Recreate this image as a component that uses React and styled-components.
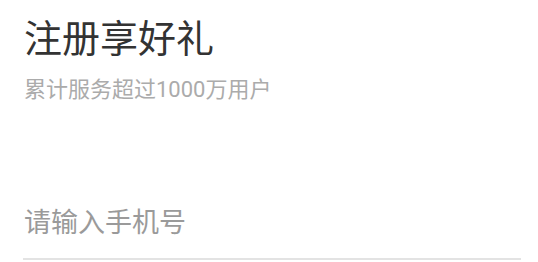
import React from 'react';
import styled, { createGlobalStyle } from 'styled-components';

const GlobalStyle = createGlobalStyle`
    html, body {
        margin: 0;
        padding: 0;
        background: #ffffff;
    }
    body {
        font-family: Roboto, "Noto Sans CJK SC", sans-serif;
    }
`;

const Page = styled.div`
    display: flex;
    flex-direction: column;
    padding: 16px 17px 0 23px;
`;

const Title = styled.h1`
    margin: 0 0 0 1px;
    font-size: 38px;
    line-height: 46px;
    font-weight: 400;
    color: #333333;
`;

const Subtitle = styled.p`
    margin: 15px 0 0 1px;
    font-size: 22px;
    line-height: 26px;
    color: #ababab;
`;

const PhoneField = styled.div`
    margin-top: 101px;
    display: flex;
    align-items: center;
    height: 56px;
    padding-bottom: 16px;
    box-sizing: border-box;
    border-bottom: 2px solid #e3e3e3;
`;

const PhoneInput = styled.input`
    flex: 1;
    border: none;
    outline: none;
    padding: 0 0 0 1px;
    background: transparent;
    font-family: Roboto, "Noto Sans CJK SC", sans-serif;
    font-size: 27px;
    color: #333333;

    &::placeholder {
        color: #9a9a9a;
    }
`;

const App = () => {
    return (
        <>
            <GlobalStyle />
            <Page>
                <Title>注册享好礼</Title>
                <Subtitle>累计服务超过1000万用户</Subtitle>
                <PhoneField>
                    <PhoneInput type="tel" placeholder="请输入手机号" />
                </PhoneField>
            </Page>
        </>
    );
};

export default App;
